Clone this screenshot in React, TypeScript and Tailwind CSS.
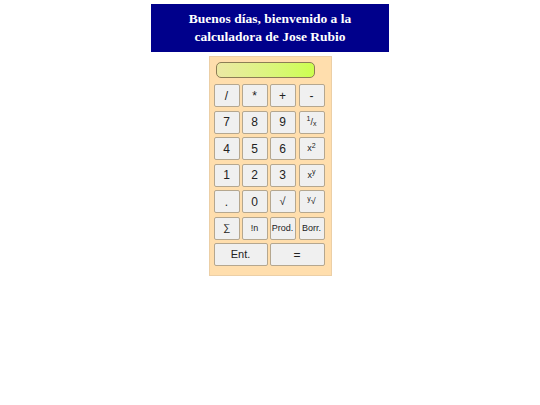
import type { ReactNode } from 'react'

type Key = { label: ReactNode; size?: string; span?: boolean }

const sans = { fontFamily: '"Liberation Sans", Arial, sans-serif' }

const keys: Key[] = [
  { label: '/' },
  { label: '*' },
  { label: '+' },
  { label: '-' },
  { label: '7' },
  { label: '8' },
  { label: '9' },
  {
    label: (
      <span className="text-[9px]">
        <sup className="text-[7px]">1</sup>/<sub className="text-[7px]">x</sub>
      </span>
    ),
  },
  { label: '4' },
  { label: '5' },
  { label: '6' },
  {
    label: (
      <span className="text-[9px]">
        x<sup className="text-[7px]">2</sup>
      </span>
    ),
  },
  { label: '1' },
  { label: '2' },
  { label: '3' },
  {
    label: (
      <span className="text-[9px]">
        x<sup className="text-[7px]">y</sup>
      </span>
    ),
  },
  { label: '.' },
  { label: '0' },
  { label: '√', size: 'text-[11px]' },
  {
    label: (
      <span className="text-[9px]">
        <sup className="text-[7px]">y</sup>√
      </span>
    ),
  },
  { label: '∑', size: 'text-[10px]' },
  { label: '!n', size: 'text-[9px]' },
  { label: 'Prod.', size: 'text-[9px]' },
  { label: 'Borr.', size: 'text-[9px]' },
  { label: 'Ent.', size: 'text-[11px]', span: true },
  { label: '=', size: 'text-[12px]', span: true },
]

export default function App() {
  return (
    <div className="min-h-screen w-full bg-white flex flex-col items-center pt-[4px]">
      {/* Greeting banner */}
      <div
        className="w-[238px] h-[48px] bg-[#00008b] flex items-center justify-center text-center text-white font-bold text-[13.5px] leading-[18px]"
        style={{ fontFamily: '"Liberation Serif", "Times New Roman", serif' }}
      >
        <div>
          Buenos días, bienvenido a la
          <br />
          calculadora de Jose Rubio
        </div>
      </div>

      {/* Calculator body */}
      <div className="mt-[4px] w-[123px] h-[220px] border border-[#eccfa6] bg-[#ffdead]">
        <div className="ml-[6px] mt-[5px] w-[99px] h-[16px] rounded-[5px] border border-[#8c7d55] bg-gradient-to-r from-[#ece8a4] to-[#ccff4e]" />

        <div className="ml-[4px] mt-[6px] grid grid-cols-[26px_26px_27px_26px] auto-rows-[23px] gap-x-[2px] gap-y-[3.5px] justify-items-start">
          {keys.map((k, i) => (
            <button
              key={i}
              className={`${k.span ? 'col-span-2 w-full' : 'w-[26px]'} h-[23px] flex items-center justify-center rounded-[2px] border border-[#b5a78f] bg-[#f0f0f0] text-[#222] leading-none ${k.size ?? 'text-[12px]'}`}
              style={sans}
            >
              {k.label}
            </button>
          ))}
        </div>
      </div>
    </div>
  )
}
